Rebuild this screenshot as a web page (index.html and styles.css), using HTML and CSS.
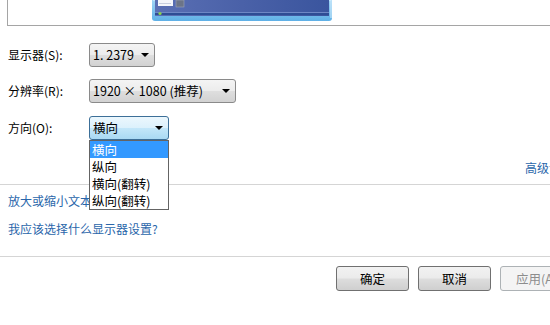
FILE: index.html
```html
<!DOCTYPE html>
<html lang="zh-CN">
<head>
<meta charset="utf-8">
<title>屏幕分辨率</title>
<link rel="stylesheet" href="styles.css">
</head>
<body>
<div class="page">
  <div class="preview">
    <svg class="monitor" width="180" height="21" viewBox="0 0 180 21">
      <defs>
        <linearGradient id="frame" x1="0" y1="0" x2="0" y2="1">
          <stop offset="0" stop-color="#9fd4f5"/>
          <stop offset="1" stop-color="#5fb0e6"/>
        </linearGradient>
        <linearGradient id="screen" x1="0" y1="0" x2="1" y2="0">
          <stop offset="0" stop-color="#5a6fb4"/>
          <stop offset="0.5" stop-color="#4a61a8"/>
          <stop offset="1" stop-color="#3a559e"/>
        </linearGradient>
      </defs>
      <path d="M0 0 H180 V18 Q180 21 177 21 H3 Q0 21 0 18 Z" fill="url(#frame)"/>
      <path d="M1 0 H179 V18" fill="none" stroke="#d8f0fd" stroke-width="1"/>
      <rect x="3" y="0" width="174" height="16" fill="url(#screen)"/>
      <rect x="3" y="12" width="174" height="3" fill="#2e4d95"/>
      <rect x="3" y="12" width="174" height="1" fill="#6e87c4"/>
      <rect x="6" y="0" width="15" height="6" fill="#f4f6fb"/>
      <rect x="7" y="3" width="12" height="1" fill="#c8cfe0"/>
      <rect x="24" y="0" width="8" height="7" fill="#6b7488"/>
      <rect x="24" y="0" width="8" height="7" fill="none" stroke="#9aa3b8" stroke-width="0.6"/>
      <circle cx="8" cy="13.5" r="1.6" fill="#8bd04a"/>
    </svg>
  </div>

  <div class="form">
    <div class="row">
      <span class="label">显示器(S):</span>
      <div class="combo combo-s"><span>1. 2379</span><i class="arrow"></i></div>
    </div>
    <div class="row row2">
      <span class="label">分辨率(R):</span>
      <div class="combo combo-r"><span>1920 × 1080 (推荐)</span><i class="arrow"></i></div>
    </div>
    <div class="row row3">
      <span class="label">方向(O):</span>
      <div class="combo-wrap">
        <div class="combo combo-o focus"><span>横向</span><i class="arrow"></i></div>
        <ul class="dropdown">
          <li class="sel">横向</li>
          <li>纵向</li>
          <li>横向(翻转)</li>
          <li>纵向(翻转)</li>
        </ul>
      </div>
    </div>
  </div>

  <div class="adv"><a class="link">高级设置</a></div>
  <div class="sep sep1"></div>
  <div class="links">
    <a class="link">放大或缩小文本和其他项目</a>
    <a class="link second">我应该选择什么显示器设置?</a>
  </div>
  <div class="sep sep2"></div>
  <div class="buttons">
    <button class="btn">确定</button>
    <button class="btn">取消</button>
    <button class="btn disabled">应用(A)</button>
  </div>
</div>
</body>
</html>
```

FILE: styles.css
```css
html, body {
  margin: 0;
  padding: 0;
  overflow: hidden;
  background: #ffffff;
}

body {
  font-family: "Noto Sans CJK SC", "Noto Sans", sans-serif;
  font-size: 12px;
  color: #000;
}

.page {
  width: 600px;
}

.preview {
  margin-left: 7px;
  height: 25px;
  border-left: 1px solid #a5a5a5;
  border-bottom: 1px solid #a5a5a5;
}

.monitor {
  display: block;
  margin-left: 144px;
}

.form {
  margin-top: 17px;
  padding-left: 8px;
}

.row {
  display: flex;
  align-items: center;
  height: 24px;
}

.row2 { margin-top: 12px; }
.row3 { margin-top: 13px; }

.label {
  width: 81px;
  line-height: 16px;
}

.combo {
  box-sizing: border-box;
  height: 24px;
  display: flex;
  align-items: center;
  padding-left: 3px;
  border: 1px solid #8a8a8a;
  border-radius: 3px;
  background: linear-gradient(#f4f4f4 0%, #ececec 48%, #dedede 52%, #d2d2d2 100%);
  position: relative;
  line-height: 16px;
  font-size: 12.5px;
}

.combo span { flex: 1; }

.combo-s { width: 66px; }
.combo-r { width: 147px; }
.combo-o { width: 80px; }

.combo.focus {
  border-color: #3c6f98;
  background: linear-gradient(#ecf7fd 0%, #dcf1fc 48%, #c2e6f9 52%, #a9d9f3 100%);
}

.arrow {
  width: 0;
  height: 0;
  border-left: 4px solid transparent;
  border-right: 4px solid transparent;
  border-top: 4px solid #000;
  margin-right: 5px;
}

.combo-wrap {
  position: relative;
}

.dropdown {
  position: absolute;
  left: 0;
  top: 24px;
  width: 80px;
  box-sizing: border-box;
  margin: 0;
  padding: 0;
  list-style: none;
  background: #fff;
  border: 1px solid #646464;
  z-index: 2;
}

.dropdown li {
  height: 17px;
  line-height: 17px;
  padding-left: 2px;
  font-size: 12.5px;
}

.dropdown li.sel {
  background: #3399ff;
  color: #fff;
}

.link {
  color: #2a66aa;
  line-height: 16px;
  cursor: pointer;
}

.adv {
  margin-top: 19px;
  text-align: right;
  padding-right: 27px;
  height: 16px;
}

.sep {
  height: 1px;
  background: #d5d5d5;
}

.sep1 { margin-top: 9px; }

.links {
  display: flex;
  flex-direction: column;
  padding-left: 8px;
  margin-top: 8px;
}

.links .second { margin-top: 12px; }

.sep2 { margin-top: 19px; }

.buttons {
  display: flex;
  justify-content: flex-end;
  gap: 9px;
  padding-right: 27px;
  margin-top: 9px;
}

.btn {
  box-sizing: border-box;
  width: 73px;
  height: 25px;
  border: 1px solid #707070;
  border-radius: 3px;
  background: linear-gradient(#f2f2f2 0%, #ebebeb 48%, #dddddd 52%, #cfcfcf 100%);
  font-family: "Noto Sans CJK SC", "Noto Sans", sans-serif;
  font-size: 12.5px;
  color: #000;
  padding: 0;
}

.btn.disabled {
  border-color: #adb2b5;
  background: #f4f4f4;
  color: #8d8d8d;
}
```
